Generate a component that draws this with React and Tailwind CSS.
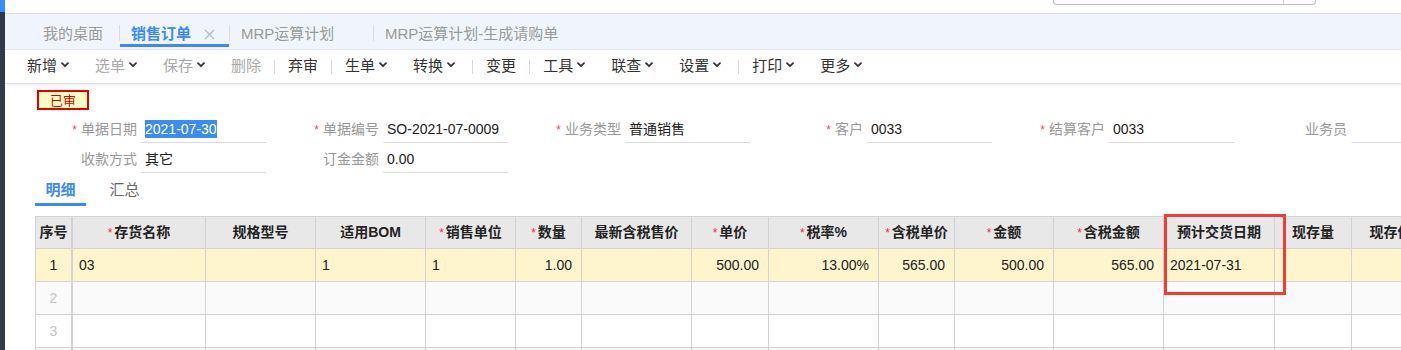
import React from "react";

const FONT = "font-['Liberation_Sans','Noto_Sans_CJK_SC',sans-serif]";

function Chevron() {
  return (
    <svg width="8" height="6" viewBox="0 0 8 6" className="ml-[4px] mb-[4px] flex-none">
      <path d="M1 1.2 L4 4.2 L7 1.2" fill="none" stroke="#333" strokeWidth="1.8" strokeLinecap="round" strokeLinejoin="round" />
    </svg>
  );
}

function ToolItem({ label, chevron, disabled }) {
  return (
    <div className={"flex items-center px-[13px] text-[15px] " + (disabled ? "text-[#aaa]" : "text-[#333]")}>
      <span>{label}</span>
      {chevron && <Chevron />}
    </div>
  );
}

function ToolSep({ shifted }) {
  return <div className={"w-px h-[14px] bg-[#d8d8d8] flex-none " + (shifted ? "ml-[4px]" : "")} />;
}

function Field({ label, req, value, selected }) {
  return (
    <div className="flex flex-none w-[242px]">
      <div className="w-[105px] h-[27px] pr-[4px] flex items-center justify-end text-[14px] text-[#999]">
        {req && <span className="text-[#f5475b] text-[12px] mr-[4px]">*</span>}
        <span>{label}</span>
      </div>
      <div className="w-[125px] h-[27px] border-b border-[#dedede] pl-[4px] flex items-center text-[14px] text-[#222]">
        {selected ? <span className="bg-[#3b8cf3] text-white leading-[18px]">{value}</span> : <span>{value}</span>}
      </div>
    </div>
  );
}

const cols = [
  { w: "w-[37px] border-r-2", label: "序号", align: "center" },
  { w: "w-[133px] border-r", label: "存货名称", req: true, align: "left" },
  { w: "w-[110px] border-r", label: "规格型号", align: "left" },
  { w: "w-[110px] border-r", label: "适用BOM", align: "left" },
  { w: "w-[90px] border-r", label: "销售单位", req: true, align: "left" },
  { w: "w-[66px] border-r", label: "数量", req: true, align: "right" },
  { w: "w-[110px] border-r", label: "最新含税售价", align: "right" },
  { w: "w-[77px] border-r", label: "单价", req: true, align: "right" },
  { w: "w-[110px] border-r", label: "税率%", req: true, align: "right" },
  { w: "w-[76px] border-r", label: "含税单价", req: true, align: "right" },
  { w: "w-[99px] border-r", label: "金额", req: true, align: "right" },
  { w: "w-[110px] border-r", label: "含税金额", req: true, align: "right" },
  { w: "w-[111px] border-r", label: "预计交货日期", align: "left" },
  { w: "w-[77px] border-r", label: "现存量", align: "right" },
  { w: "w-[92px] border-r", label: "现存件数", align: "right" },
];

const row1 = ["1", "03", "", "1", "1", "1.00", "", "500.00", "13.00%", "565.00", "500.00", "565.00", "2021-07-31", "", ""];

const alignCls = {
  center: "justify-center",
  left: "justify-start pl-[6px]",
  right: "justify-end pr-[9px]",
};

function DataRow({ values, bg, num }) {
  return (
    <div className={"flex " + bg}>
      {cols.map((c, i) => {
        let content = "";
        if (values) content = values[i];
        else if (i === 0) content = num || "";
        return (
          <div
            key={i}
            className={"flex-none h-[33px] border-b border-[#d2d2d2] flex items-center text-[14px] " + c.w + " " + alignCls[c.align] + (values ? " text-[#222]" : " text-[#c4c4c4]")}
          >
            {content}
          </div>
        );
      })}
    </div>
  );
}

export default function App() {
  return (
    <div className={"flex h-[350px] w-[1401px] overflow-hidden bg-white " + FONT}>
      <div className="w-[5px] flex-none flex flex-col">
        <div className="h-[12px] bg-[#3d8af7]" />
        <div className="flex-1 bg-[#2f3a4a]" />
      </div>
      <div className="flex-1 min-w-0 flex flex-col">
        {/* top strip */}
        <div className="h-[14px] flex-none border-b border-[#dcdcdc] flex justify-end pr-[85px]">
          <div className="w-[263px] h-[5px] border-x border-b border-[#bdbdbd] rounded-b-[4px] flex justify-end">
            <div className="w-[32px] border-l border-[#d0d0d0]" />
          </div>
        </div>
        {/* tab bar */}
        <div className="h-[36px] flex-none bg-[#f0f5fd] border-b border-[#e1e4ea] flex items-start pl-[26px] text-[15px]">
          <div className="w-[88px] flex-none flex flex-col pl-[12px] pt-[10px]">
            <div className="h-[20px] leading-[20px] text-[#999]">我的桌面</div>
          </div>
          <div className="w-px h-[16px] mt-[11px] bg-[#dcdcdc] flex-none" />
          <div className="w-[109px] flex-none flex flex-col pt-[10px]">
            <div className="h-[20px] flex items-center pl-[11px]">
              <span className="text-[#3d8af7] font-bold">销售订单</span>
              <svg width="11" height="11" viewBox="0 0 11 11" className="ml-[13px]">
                <path d="M1 1 L10 10 M10 1 L1 10" stroke="#bbb" strokeWidth="1.4" />
              </svg>
            </div>
            <div className="h-[3px] bg-[#3d8af7]" />
          </div>
          <div className="w-px h-[16px] mt-[11px] bg-[#dcdcdc] flex-none" />
          <div className="w-[143px] flex-none pl-[11px] pt-[10px]">
            <div className="h-[20px] leading-[20px] text-[#999]">MRP运算计划</div>
          </div>
          <div className="w-px h-[16px] mt-[11px] bg-[#dcdcdc] flex-none" />
          <div className="flex-none pl-[11px] pt-[10px]">
            <div className="h-[20px] leading-[20px] text-[#999]">MRP运算计划-生成请购单</div>
          </div>
        </div>
        {/* toolbar */}
        <div className="h-[34px] flex-none border-b border-[#dedede] shadow-[0_2px_3px_rgba(0,0,0,0.05)] flex items-center pl-[9px]">
          <ToolItem label="新增" chevron />
          <ToolItem label="选单" chevron disabled />
          <ToolItem label="保存" chevron disabled />
          <ToolItem label="删除" disabled />
          <ToolSep />
          <ToolItem label="弃审" />
          <ToolSep />
          <ToolItem label="生单" chevron />
          <ToolItem label="转换" chevron />
          <ToolSep shifted />
          <ToolItem label="变更" />
          <ToolSep />
          <ToolItem label="工具" chevron />
          <ToolItem label="联查" chevron />
          <ToolItem label="设置" chevron />
          <ToolSep shifted />
          <ToolItem label="打印" chevron />
          <ToolItem label="更多" chevron />
        </div>
        {/* content */}
        <div className="flex-1 pl-[30px] flex flex-col">
          <div className="mt-[6px] ml-[2px] w-[52px] h-[20px] border-2 border-[#e00000] bg-[#ffffc6] text-[#e00000] text-[13px] flex items-center justify-center leading-none">
            已审
          </div>
          <div className="mt-[6px] ml-[1px] flex flex-col">
            <div className="flex h-[30px]">
              <Field label="单据日期" req value="2021-07-30" selected />
              <Field label="单据编号" req value="SO-2021-07-0009" />
              <Field label="业务类型" req value="普通销售" />
              <Field label="客户" req value="0033" />
              <Field label="结算客户" req value="0033" />
              <Field label="业务员" value="" />
            </div>
            <div className="flex h-[30px]">
              <Field label="收款方式" value="其它" />
              <Field label="订金金额" value="0.00" />
            </div>
          </div>
          <div className="flex h-[30px] text-[15px]">
            <div className="w-[51px] flex flex-col">
              <div className="h-[27px] pt-[2px] flex items-center justify-center text-[#3d8af7] font-bold">明细</div>
              <div className="h-[3px] bg-[#3d8af7]" />
            </div>
            <div className="w-[51px] ml-[13px] flex flex-col">
              <div className="h-[27px] pt-[2px] flex items-center justify-center text-[#666]">汇总</div>
            </div>
          </div>
          {/* table */}
          <div className="relative mt-[10px] w-max border-l border-t border-[#d2d2d2]">
            <div className="flex bg-[#e8e8e8]">
              {cols.map((c, i) => (
                <div key={i} className={"flex-none h-[32px] border-b border-[#d2d2d2] flex items-center justify-center text-[14px] font-bold text-[#222] " + c.w}>
                  {c.req && <span className="text-[#f0284a] font-normal text-[12px] mr-[2px]">*</span>}
                  <span>{c.label}</span>
                </div>
              ))}
            </div>
            <DataRow values={row1} bg="bg-[#fff5cc]" />
            <DataRow num="2" bg="bg-[#fafafa]" />
            <DataRow num="3" bg="bg-white" />
            <DataRow bg="bg-[#fafafa]" />
            <div className="absolute left-[1128px] top-[-3px] w-[122px] h-[81px] border-[3px] border-[#f23c3c] pointer-events-none" />
          </div>
        </div>
      </div>
    </div>
  );
}
